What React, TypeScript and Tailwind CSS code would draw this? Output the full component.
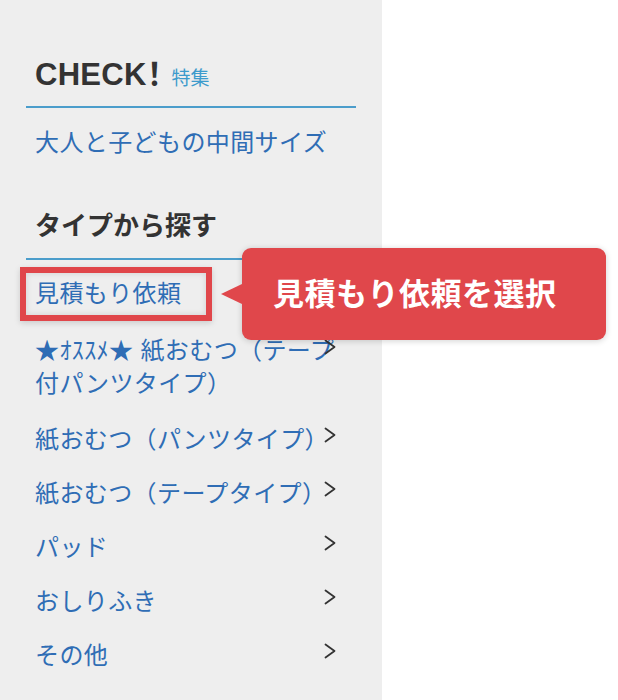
const jp = { fontFamily: '"Liberation Sans", "Noto Sans CJK JP", sans-serif' };

function Chevron({ className }: { className: string }) {
  return (
    <svg
      className={className}
      width="12"
      height="16"
      viewBox="0 0 12 16"
      fill="none"
      stroke="#333333"
      strokeWidth="1.8"
      strokeLinecap="round"
      strokeLinejoin="round"
    >
      <polyline points="1.5,1.5 10.5,8 1.5,14.5" />
    </svg>
  );
}

const types = [
  "紙おむつ（パンツタイプ）",
  "紙おむつ（テープタイプ）",
  "パッド",
  "おしりふき",
  "その他",
];

export default function App() {
  return (
    <div className="relative flex w-[618px] h-[700px] overflow-hidden bg-white" style={jp}>
      {/* サイドバー */}
      <aside className="flex flex-col w-[382px] h-full bg-[#eeeeee] pt-[56px] px-[26px]">
        <h2 className="flex items-baseline h-[38px] pl-[9px] text-[#333333]">
          <span className="text-[31px] font-bold leading-[38px] tracking-[0.3px] [font-feature-settings:'palt']">
            CHECK！
          </span>
          <span className="ml-[9px] text-[19px] text-[#3d9bcc] leading-[38px]">特集</span>
        </h2>
        <div className="mt-[12px] h-[2px] bg-[#4b9dcb]" />
        <ul className="mt-[8px] tracking-[0.4px]">
          <li className="pl-[9px] py-[10px] text-[24px] leading-[34px] text-[#2f6db5]">
            大人と子どもの中間サイズ
          </li>
        </ul>

        <h2 className="mt-[38px] pl-[9px] text-[26px] font-bold leading-[36px] text-[#333333]">
          タイプから探す
        </h2>
        <div className="mt-[14px] h-[2px] bg-[#4b9dcb]" />

        <ul className="mt-[7px] text-[24px] text-[#2f6db5] tracking-[0.4px]">
          <li className="relative pl-[9px] py-[10px] leading-[34px]">
            <div className="absolute -left-[6px] top-0 h-full w-[192px] border-[6px] border-[#e0464a] shadow-[0_2px_6px_rgba(0,0,0,0.15),inset_0_0_6px_rgba(0,0,0,0.12)]" />
            見積もり依頼
          </li>
          <li className="flex items-start pl-[9px] pr-[20px] py-[13px] leading-[33px]">
            <span className="flex-1 min-w-0">★ｵｽｽﾒ★ 紙おむつ（テープ付パンツタイプ）</span>
            <Chevron className="shrink-0 -ml-[12px] mt-[5px]" />
          </li>
          {types.map((t) => (
            <li key={t} className="flex items-start pl-[9px] pr-[20px] py-[10px] leading-[34px]">
              <span className="flex-1 min-w-0">{t}</span>
              <Chevron className="shrink-0 -ml-[12px] mt-[4px]" />
            </li>
          ))}
        </ul>
      </aside>

      {/* 吹き出し */}
      <div className="absolute left-[242px] top-[248px] flex items-center w-[364px] h-[92px] pl-[31px] rounded-[9px] bg-[#e0474b] shadow-[0_1px_6px_rgba(0,0,0,0.18)]">
        <span className="absolute -left-[21px] top-[36px] w-0 h-0 border-y-[10px] border-y-transparent border-r-[21px] border-r-[#e0474b]" />
        <span className="text-[31px] font-bold leading-none tracking-[0.5px] text-white">見積もり依頼を選択</span>
      </div>
    </div>
  );
}
